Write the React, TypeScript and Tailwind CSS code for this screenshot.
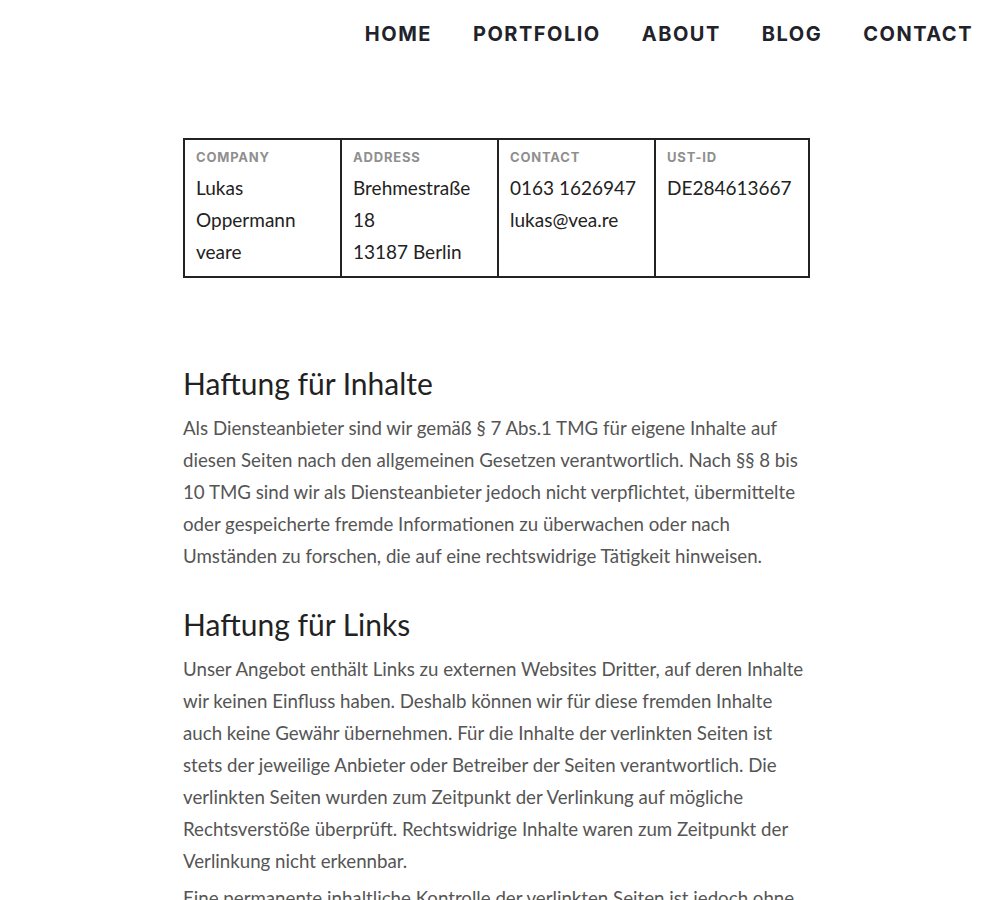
const NAV = ["Home", "Portfolio", "About", "Blog", "Contact"];

const INFO = [
    { label: "Company", lines: ["Lukas", "Oppermann", "veare"] },
    { label: "Address", lines: ["Brehmestraße", "18", "13187 Berlin"] },
    { label: "Contact", lines: ["0163 1626947", "lukas@vea.re"] },
    { label: "Ust-ID", lines: ["DE284613667"] },
];

const SECTIONS = [
    {
        title: "Haftung für Inhalte",
        paragraphs: [
            [
                "Als Diensteanbieter sind wir gemäß § 7 Abs.1 TMG für eigene Inhalte auf",
                "diesen Seiten nach den allgemeinen Gesetzen verantwortlich. Nach §§ 8 bis",
                "10 TMG sind wir als Diensteanbieter jedoch nicht verpflichtet, übermittelte",
                "oder gespeicherte fremde Informationen zu überwachen oder nach",
                "Umständen zu forschen, die auf eine rechtswidrige Tätigkeit hinweisen.",
            ],
        ],
    },
    {
        title: "Haftung für Links",
        paragraphs: [
            [
                "Unser Angebot enthält Links zu externen Websites Dritter, auf deren Inhalte",
                "wir keinen Einfluss haben. Deshalb können wir für diese fremden Inhalte",
                "auch keine Gewähr übernehmen. Für die Inhalte der verlinkten Seiten ist",
                "stets der jeweilige Anbieter oder Betreiber der Seiten verantwortlich. Die",
                "verlinkten Seiten wurden zum Zeitpunkt der Verlinkung auf mögliche",
                "Rechtsverstöße überprüft. Rechtswidrige Inhalte waren zum Zeitpunkt der",
                "Verlinkung nicht erkennbar.",
            ],
            [
                "Eine permanente inhaltliche Kontrolle der verlinkten Seiten ist jedoch ohne",
                "konkrete Anhaltspunkte einer Rechtsverletzung nicht zumutbar. Bei",
                "Bekanntwerden von Rechtsverletzungen werden wir derartige Links",
                "umgehend entfernen.",
            ],
        ],
    },
];

const App = () => {
    return (
        <div className="min-h-screen bg-white font-['Lato',sans-serif] text-[#222]">
            {/* Nav */}
            <nav className="flex justify-end items-center h-[67px] pr-[20px] gap-[41px]">
                {NAV.map(item => (
                    <a
                        key={item}
                        href="#"
                        className="uppercase font-['Inter',sans-serif] font-bold text-[20px] tracking-[1.5px] text-[#22232a]"
                    >
                        {item}
                    </a>
                ))}
            </nav>

            <main className="w-[627px] mx-auto pb-10">
                {/* Info table */}
                <div className="mt-[71px] grid grid-cols-[157px_157px_157px_1fr] border-2 border-[#222]">
                    {INFO.map((col, i) => (
                        <div key={col.label} className={`pl-[11px] pt-[9px] pb-[8px] ${i < 3 ? "border-r-2 border-[#222]" : ""}`}>
                            <div className="uppercase font-['Inter',sans-serif] font-bold text-[13px] tracking-[0.8px] text-[#8f8f8f] leading-4">
                                {col.label}
                            </div>
                            <div className="mt-[7px] text-[19px] leading-8 text-[#222]">
                                {col.lines.map(l => <div key={l}>{l}</div>)}
                            </div>
                        </div>
                    ))}
                </div>

                {/* Sections */}
                {SECTIONS.map((section, si) => (
                    <section key={section.title} className={si === 0 ? "mt-[84px]" : "mt-[31px]"}>
                        <h2 className="text-[30px] leading-[42px] text-[#222]">{section.title}</h2>
                        {section.paragraphs.map((lines, pi) => (
                            <p
                                key={pi}
                                className={`text-[18.7px] leading-8 text-[#555] whitespace-nowrap ${pi === 0 ? "mt-[8px]" : "mt-[5px]"}`}
                            >
                                {lines.map((l, li) => (
                                    <span key={li}>
                                        {l}
                                        {li < lines.length - 1 && <br />}
                                    </span>
                                ))}
                            </p>
                        ))}
                    </section>
                ))}
            </main>
        </div>
    );
};

export default App;
